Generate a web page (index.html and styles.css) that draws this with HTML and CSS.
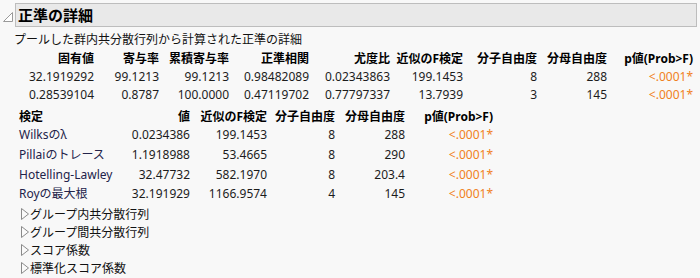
FILE: index.html
```html
<!DOCTYPE html>
<html lang="ja">
<head>
<meta charset="utf-8">
<link rel="stylesheet" href="styles.css">
</head>
<body>
<div class="report">
  <div class="head">
    <svg class="tri-open" width="10" height="10" viewBox="0 0 10 10"><path d="M0.5 9.5 L9.5 0.5 L9.5 9.5 Z" fill="#fff" stroke="#9a9a9a" stroke-width="1"/></svg>
    <div class="titlebox">正準の詳細</div>
  </div>
  <div class="sub">プールした群内共分散行列から計算された正準の詳細</div>

  <div class="t1">
    <div class="h">固有値</div><div class="h">寄与率</div><div class="h">累積寄与率</div><div class="h">正準相関</div><div class="h">尤度比</div><div class="h">近似のF検定</div><div class="h">分子自由度</div><div class="h">分母自由度</div><div class="h">p値(Prob&gt;F)</div>
    <div>32.1919292</div><div>99.1213</div><div>99.1213</div><div>0.98482089</div><div>0.02343863</div><div>199.1453</div><div>8</div><div>288</div><div class="p">&lt;.0001*</div>
    <div>0.28539104</div><div>0.8787</div><div>100.0000</div><div>0.47119702</div><div>0.77797337</div><div>13.7939</div><div>3</div><div>145</div><div class="p">&lt;.0001*</div>
  </div>

  <div class="t2">
    <div class="h l">検定</div><div class="h">値</div><div class="h">近似のF検定</div><div class="h">分子自由度</div><div class="h">分母自由度</div><div class="h">p値(Prob&gt;F)</div>
    <div class="l lab">Wilksのλ</div><div>0.0234386</div><div>199.1453</div><div>8</div><div>288</div><div class="p">&lt;.0001*</div>
    <div class="l lab">Pillaiのトレース</div><div>1.1918988</div><div>53.4665</div><div>8</div><div>290</div><div class="p">&lt;.0001*</div>
    <div class="l lab">Hotelling-Lawley</div><div>32.47732</div><div>582.1970</div><div>8</div><div>203.4</div><div class="p">&lt;.0001*</div>
    <div class="l lab">Royの最大根</div><div>32.191929</div><div>1166.9574</div><div>4</div><div>145</div><div class="p">&lt;.0001*</div>
  </div>

  <ul class="outline">
    <li><svg class="tri" width="8" height="12" viewBox="0 0 8 12"><path d="M0.5 0.5 L7.5 6 L0.5 11.5 Z" fill="#fafafa" stroke="#8a8a8a"/></svg>グループ内共分散行列</li>
    <li><svg class="tri" width="8" height="12" viewBox="0 0 8 12"><path d="M0.5 0.5 L7.5 6 L0.5 11.5 Z" fill="#fafafa" stroke="#8a8a8a"/></svg>グループ間共分散行列</li>
    <li><svg class="tri" width="8" height="12" viewBox="0 0 8 12"><path d="M0.5 0.5 L7.5 6 L0.5 11.5 Z" fill="#fafafa" stroke="#8a8a8a"/></svg>スコア係数</li>
    <li><svg class="tri" width="8" height="12" viewBox="0 0 8 12"><path d="M0.5 0.5 L7.5 6 L0.5 11.5 Z" fill="#fafafa" stroke="#8a8a8a"/></svg>標準化スコア係数</li>
  </ul>
</div>
</body>
</html>
```

FILE: styles.css
```css
html, body {
  margin: 0;
  padding: 0;
  background: #f8f8f8;
}
body {
  font-family: "Noto Sans", "Noto Sans CJK JP", sans-serif;
  font-size: 12px;
  color: #1c1c1c;
  width: 700px;
  height: 278px;
  overflow: hidden;
}
.report {
  padding-top: 3px;
}
.head {
  display: flex;
  align-items: center;
  height: 24px;
}
.tri-open {
  margin-left: 3px;
  margin-right: 2px;
  margin-top: 4px;
}
.titlebox {
  box-sizing: border-box;
  width: 682px;
  height: 24px;
  background: #e9e9e9;
  border: 1px solid #bdbdbd;
  font-weight: bold;
  font-size: 15px;
  line-height: 22px;
  padding-left: 2px;
  color: #000;
}
.sub {
  margin-left: 14px;
  margin-top: 4px;
  height: 18px;
  line-height: 18px;
  color: #111;
}
.t1 {
  display: grid;
  grid-template-columns: 94px 65px 70px 80px 81px 73px 74px 70px 86px;
  grid-template-rows: 18px 18px 17px;
  margin-top: 1px;
  line-height: 18px;
  justify-items: end;
}
.t2 {
  display: grid;
  grid-template-columns: 100px 71px 77px 68px 70px 88px;
  grid-template-rows: 18px 20px 20px 19px 19px;
  margin-left: 19px;
  margin-top: 5px;
  line-height: 18px;
  justify-items: end;
}
.h {
  font-weight: bold;
  color: #000;
}
.l {
  justify-self: start;
}
.lab {
  color: #23234a;
}
.p {
  color: #f08122;
}
.outline {
  list-style: none;
  margin: 1px 0 0 21px;
  padding: 0;
}
.outline li {
  display: flex;
  align-items: center;
  height: 18px;
  color: #111;
}
.tri {
  margin-right: 1px;
}
```
